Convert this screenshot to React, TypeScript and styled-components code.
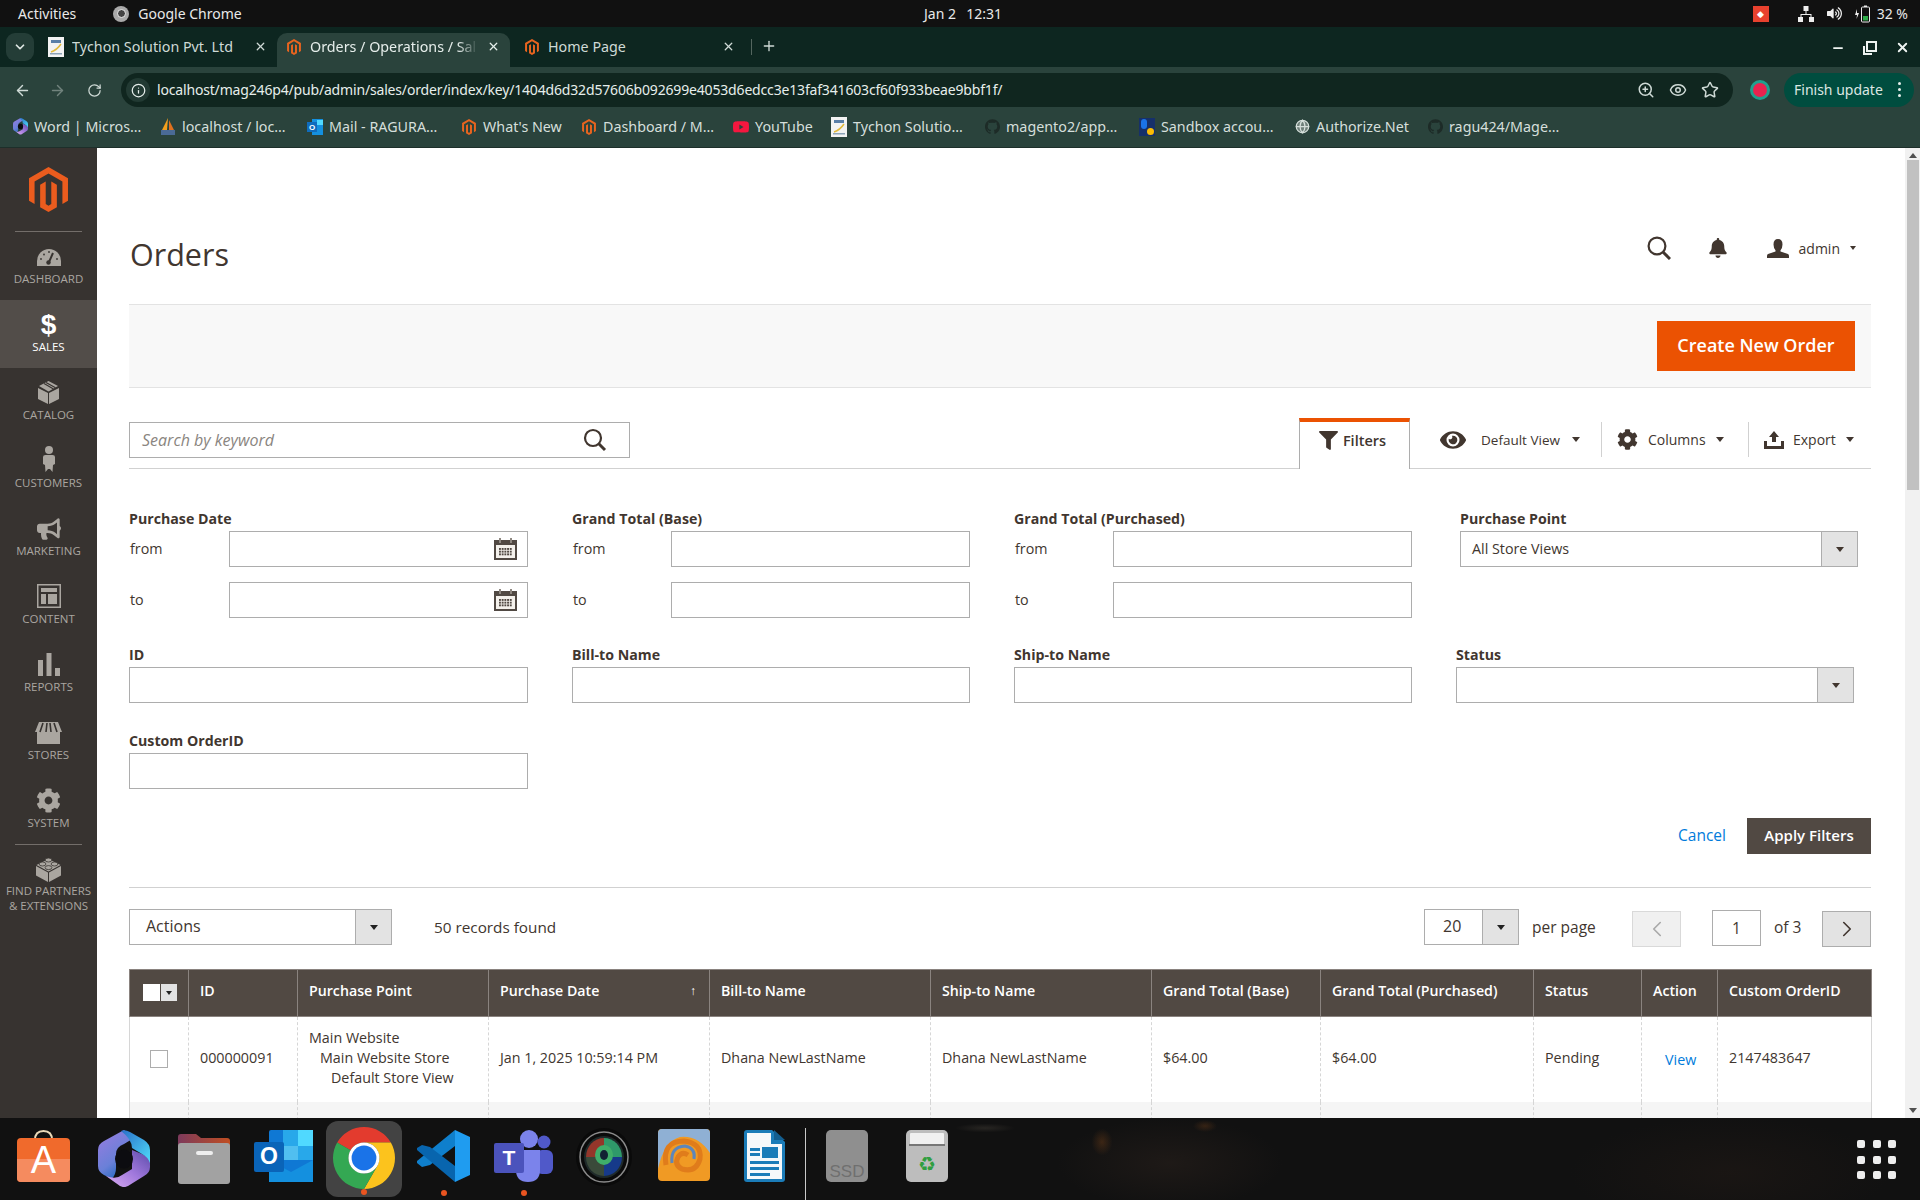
import React from 'react';
import styled, { createGlobalStyle } from 'styled-components';
import { ArrowLeft, ArrowRight, RotateCw, Info, Star, Eye, ZoomIn, Minus, X, Plus, ChevronDown, ChevronLeft, ChevronRight, Globe } from 'lucide-react';
import { SiMagento, SiGithub, SiYoutube } from 'react-icons/si';
import { FaFilter, FaEye, FaCog, FaBell, FaBullhorn, FaVolumeUp } from 'react-icons/fa';

const Global = createGlobalStyle`
  * { box-sizing: border-box; }
  html, body { margin: 0; padding: 0; overflow: hidden; background: #111; }
  body { font-family: "Open Sans", "Noto Sans", sans-serif; color: #41362f; }
`;

const CHROME_FONT = `"Noto Sans", "Open Sans", sans-serif`;

const Screen = styled.div`width: 1920px; height: 1200px; display: flex; flex-direction: column; overflow: hidden;`;

/* ---------- GNOME top bar ---------- */
const TopBar = styled.div`
  height: 27px; background: #111; color: #e9e9e9; font: 14px ${CHROME_FONT};
  display: flex; align-items: center; padding: 0 12px 0 18px; flex: none;
`;
const TopSide = styled.div<{ $end?: boolean }>`flex: 1; display: flex; align-items: center; justify-content: ${p => (p.$end ? 'flex-end' : 'flex-start')};`;
const Activities = styled.span`margin-right: 37px;`;
const AppName = styled.span`display: flex; align-items: center; gap: 9px;`;
const AppDot = styled.span`width: 16px; height: 16px; border-radius: 50%; background: #aaa; display: flex; align-items: center; justify-content: center; &::after { content: ''; width: 7px; height: 7px; border-radius: 50%; background: #444; border: 1px solid #eee; }`;
const Clock = styled.div`width: 78px; text-align: center; display: flex; justify-content: space-between; white-space: nowrap;`;
const TrayRed = styled.span`width: 16px; height: 16px; background: #e8412e; display: flex; align-items: center; justify-content: center; margin-right: 29px; color: #fff; font-size: 9px;`;
const TrayIcon = styled.span<{ $mr: number }>`display: flex; margin-right: ${p => p.$mr}px; color: #eee;`;

/* ---------- Chrome ---------- */
const TabStrip = styled.div`height: 40px; background: #0d2620; display: flex; align-items: flex-end; flex: none; font: 14.3px ${CHROME_FONT}; color: #cfdad6;`;
const TabChevron = styled.div`width: 28px; height: 28px; margin: 0 6px 6px 6px; border-radius: 9px; background: #243d37; display: flex; align-items: center; justify-content: center; color: #dfe7e4;`;
const Tab = styled.div<{ $active?: boolean; $w: number; $pl: number }>`
  width: ${p => p.$w}px; height: 34px; padding: 0 10px 7px ${p => p.$pl}px; display: flex; align-items: center;
  background: ${p => (p.$active ? '#2a433c' : 'transparent')}; border-radius: 10px 10px 0 0;
  color: ${p => (p.$active ? '#e6eeeb' : '#cfdad6')};
`;
const TabTitle = styled.span<{ $fade?: boolean }>`
  flex: 1; margin-left: 8px; white-space: nowrap; overflow: hidden; min-width: 0;
  ${p => (p.$fade ? 'mask-image: linear-gradient(90deg,#000 88%,transparent 100%);' : '')}
`;
const TabClose = styled.span<{ $ml?: number }>`display: flex; margin-left: ${p => p.$ml ?? 0}px;`;
const TabSep = styled.span`width: 1px; height: 16px; background: #54665f; margin: 0 9px 12px 6px;`;
const NewTab = styled.span`display: flex; margin-bottom: 13px; color: #cfdad6;`;
const WinControls = styled.div`margin-left: auto; display: flex; gap: 18px; align-items: center; padding: 0 10px 12px 0; color: #eef3f1;`;
const Toolbar = styled.div`height: 40px; background: #2a433c; display: flex; align-items: flex-start; padding-top: 6px; flex: none; color: #cfdad6;`;
const NavIcon = styled.span<{ $ml: number; $dim?: boolean }>`width: 18px; height: 34px; margin-left: ${p => p.$ml}px; display: flex; align-items: center; justify-content: center; color: ${p => (p.$dim ? '#71837d' : '#cfdad6')};`;
const AddressBar = styled.div`
  width: 1612px; height: 34px; margin-left: 18px; border-radius: 17px; background: #10261f;
  display: flex; align-items: center; padding: 0 14px 0 5px; color: #e6eeeb; font: 14px ${CHROME_FONT};
`;
const SiteInfo = styled.span`width: 24px; height: 24px; border-radius: 50%; background: #223a33; display: flex; align-items: center; justify-content: center; margin-right: 7px;`;
const Url = styled.span`flex: 1; white-space: nowrap; overflow: hidden; letter-spacing: -0.17px; padding-bottom: 1px;`;
const AddrIcons = styled.span`display: flex; gap: 14px; color: #cfdad6;`;
const Profile = styled.span`width: 20px; height: 20px; border-radius: 50%; background: #e8234f; border: 3px solid #1f9f8e; margin: 7px 14px 0 17px; flex: none;`;
const FinishPill = styled.div`width: 130px; height: 34px; border-radius: 17px; background: #004d3f; display: flex; align-items: center; justify-content: space-between; padding: 0 13px 1px 10px; font: 14px ${CHROME_FONT}; color: #dce7e3; flex: none;`;
const Dots = styled.span`display: flex; flex-direction: column; gap: 3px; span { width: 3px; height: 3px; border-radius: 50%; background: #e6eeeb; display: block; }`;
const BookmarkBar = styled.div`height: 41px; background: #2a433c; display: flex; align-items: center; padding: 0 0 1px 12px; flex: none; border-bottom: 1px solid #1d2f2a; font: 14.3px ${CHROME_FONT}; color: #d5dfdb;`;
const Bookmark = styled.div<{ $w: number }>`width: ${p => p.$w}px; display: flex; align-items: center; gap: 6px; white-space: nowrap; flex: none;`;
const BmGlyph = styled.span`width: 16px; height: 16px; display: flex; align-items: center; justify-content: center; flex: none;`;

/* ---------- Middle ---------- */
const Middle = styled.div`flex: 1; min-height: 0; display: flex; background: #fff;`;
const Sidebar = styled.nav`width: 97px; background: #373330; flex: none; display: flex; flex-direction: column;`;
const LogoBox = styled.div`height: 83px; display: flex; align-items: center; justify-content: center; padding-bottom: 1px;`;
const SideRule = styled.div`height: 1px; margin: 0 15px; background: #736e6a; flex: none;`;
const SideItem = styled.div<{ $active?: boolean }>`
  height: 68px; display: flex; flex-direction: column; align-items: center; padding-top: 10px;
  background: ${p => (p.$active ? '#524d49' : 'transparent')}; color: ${p => (p.$active ? '#fff' : '#aaa6a0')};
`;
const SideIcon = styled.div<{ $up?: number }>`height: 29px; display: flex; align-items: center; justify-content: center; padding-bottom: ${p => p.$up ?? 0}px;`;
const SideLabel = styled.div`font-size: 11.5px; line-height: 15px; text-transform: uppercase; text-align: center; white-space: nowrap;`;
const Dollar = styled.span`font: 700 28px/28px "Liberation Sans", sans-serif;`;

const Main = styled.main`flex: 1; min-width: 0; padding: 0 34px 0 32px; overflow: hidden;`;
const PageHead = styled.header`height: 156px; padding-top: 56px; display: flex; align-items: center; justify-content: space-between;`;
const PageTitle = styled.h1`margin: 0; font-size: 30.5px; font-weight: 400; color: #41362f; line-height: 44px; padding-left: 1px;`;
const UserBar = styled.div`display: flex; align-items: center; margin: 0 15px 12px 0; color: #41362f; font-size: 14px;`;
const UserName = styled.span`margin: 0 10px 0 10px;`;
const Caret = styled.i<{ $c?: string; $s?: number }>`
  display: block; width: 0; height: 0; flex: none;
  border-left: ${p => p.$s ?? 4}px solid transparent; border-right: ${p => p.$s ?? 4}px solid transparent;
  border-top: ${p => (p.$s ?? 4) + 1}px solid ${p => p.$c ?? '#41362f'};
`;
const ActionBar = styled.div`height: 84px; background: #f8f8f8; border: solid #e3e3e3; border-width: 1px 0; display: flex; align-items: center; justify-content: flex-end; padding-right: 16px;`;
const PrimaryBtn = styled.button`width: 198px; height: 50px; border: 0; padding: 0 0 2px; background: #eb5202; color: #fff; font: 600 18px "Open Sans", sans-serif;`;

const ToolRow = styled.div`margin-top: 30px; height: 51px; border-bottom: 1px solid #d1d1d1; display: flex; justify-content: space-between;`;
const SearchBox = styled.div`width: 501px; height: 36px; margin-top: 4px; border: 1px solid #adadad; display: flex; align-items: center; justify-content: space-between; padding: 0 22px 1px 12px; font: italic 16px "Open Sans", sans-serif; color: #8a8580;`;
const ToolGroup = styled.div`display: flex; height: 51px;`;
const FilterTab = styled.div`
  width: 111px; height: 51px; background: #fff; border: 1px solid #adadad; border-top: 4px solid #eb5202; border-bottom: 0;
  display: flex; align-items: center; justify-content: center; gap: 5px; font-size: 14.5px; font-weight: 600; padding: 0 4px 11px 0;
`;
const ToolBtn = styled.div<{ $w: number; $pl: number; $gap: number; $rule?: boolean }>`
  width: ${p => p.$w}px; padding-left: ${p => p.$pl}px; gap: ${p => p.$gap}px; height: 35px; margin-top: 4px;
  display: flex; align-items: center; font-size: 14px; white-space: nowrap;
  ${p => (p.$rule ? 'border-right: 1px solid #d1d1d1;' : '')}
`;
const ToolText = styled.span<{ $mr: number; $fs?: number }>`margin-right: ${p => p.$mr}px; font-size: ${p => p.$fs ?? 14}px;`;

const FilterGrid = styled.div`margin-top: 40px; display: grid; grid-template-columns: 399px 398px 398px 1fr; column-gap: 44px; row-gap: 27px;`;
const Field = styled.div<{ $ml?: number; $tm?: number }>`margin-left: ${p => p.$ml ?? 0}px; margin-top: ${p => p.$tm ?? 0}px; min-width: 0;`;
const FieldLabel = styled.div`font-size: 14.2px; font-weight: 700; line-height: 20px; margin-bottom: 2px; color: #41362f;`;
const RangeRow = styled.div<{ $lw?: number }>`display: flex; align-items: center; font-size: 14.3px; margin-bottom: 15px; &:last-child { margin-bottom: 0; } > span { width: ${p => p.$lw ?? 100}px; padding-left: 1px; flex: none; margin-top: -2px; }`;
const TextInput = styled.div`flex: 1; height: 36px; border: 1px solid #adadad; background: #fff; display: flex; align-items: center; justify-content: flex-end; padding-right: 10px;`;
const SelectBox = styled.div<{ $w?: number; $h?: number; $seg?: number }>`
  width: ${p => (p.$w ? `${p.$w}px` : '100%')}; height: ${p => p.$h ?? 36}px; border: 1px solid #adadad; background: #fff; display: flex; align-items: center; font-size: 14.3px; flex: none;
  > span { flex: 1; padding: 0 0 2px 11px; white-space: nowrap; }
  > b { width: ${p => p.$seg ?? 36}px; height: 100%; background: #e3e3e3; border-left: 1px solid #adadad; display: flex; align-items: center; justify-content: center; }
`;
const BigValue = styled.span<{ $pl: number }>`&& { padding-left: ${p => p.$pl}px; font-size: 16px; }`;
const FilterFoot = styled.div`margin-top: 29px; padding-bottom: 33px; border-bottom: 1px solid #d1d1d1; display: flex; justify-content: flex-end; align-items: center; gap: 21px;`;
const LinkText = styled.span`color: #007bdb; font-size: 15.5px; margin-bottom: 2px;`;
const DarkBtn = styled.button`width: 124px; height: 36px; border: 0; padding: 0 0 2px; background: #514943; color: #fff; font: 600 15px "Open Sans", sans-serif;`;

const Paging = styled.div`margin-top: 21px; height: 38px; display: flex; align-items: flex-start; font-size: 15.5px;`;
const Records = styled.span`margin-left: 42px; line-height: 36px; font-size: 15.3px; flex: 1;`;
const PagerText = styled.span<{ $ml: number; $w?: number }>`margin-left: ${p => p.$ml}px; line-height: 36px; ${p => (p.$w ? `width: ${p.$w}px;` : '')} white-space: nowrap;`;
const PageBtn = styled.div<{ $off?: boolean; $ml: number }>`
  width: 49px; height: 36px; margin-top: 2px; margin-left: ${p => p.$ml}px; display: flex; align-items: center; justify-content: center;
  background: ${p => (p.$off ? '#f0f0f0' : '#e3e3e3')}; border: 1px solid ${p => (p.$off ? '#d9d9d9' : '#adadad')}; color: ${p => (p.$off ? '#a8a8a8' : '#41362f')};
`;
const PageInput = styled.div`width: 49px; height: 36px; margin: 1px 0 0 31px; border: 1px solid #adadad; display: flex; align-items: center; justify-content: center;`;

const Grid = styled.table`margin-top: 22px; width: 1742px; border-collapse: collapse; table-layout: fixed; font-size: 14.3px;`;
const HeadCell = styled.th`
  height: 47px; background: #514943; color: #fff; font-weight: 600; font-size: 14.2px; text-align: left; padding: 0 10px 5px 11px;
  border: 1px solid #8a837f; white-space: nowrap;
`;
const MassCell = styled(HeadCell)`padding: 0 0 0 10px;`;
const HeadFlex = styled.span`display: flex; justify-content: space-between; align-items: center;`;
const SortMark = styled.span`font-size: 12px; font-weight: 400; margin-right: 3px;`;
const MassBox = styled.div`width: 34px; height: 17px; display: flex; margin-left: 3px; margin-top: -1px; > i { width: 17px; background: #fff; display: block; } > b { width: 17px; margin-left: 1px; background: #e3e3e3; display: flex; align-items: center; justify-content: center; }`;
const Row = styled.tr<{ $alt?: boolean }>`background: ${p => (p.$alt ? '#f5f5f5' : '#fff')};`;
const Cell = styled.td`height: 85px; padding: 0 10px 3px 11px; border-left: 1px dashed #d6d6d6; border-right: 1px dashed #d6d6d6; white-space: nowrap; vertical-align: middle; &:first-child { border-left: 1px solid #d6d6d6; } &:last-child { border-right: 1px solid #d6d6d6; }`;
const PointLine = styled.div<{ $lvl: number }>`padding-left: ${p => p.$lvl * 11}px; line-height: 20px;`;
const CheckBox = styled.div`width: 18px; height: 18px; border: 1px solid #adadad; background: #fff; margin: 2px 0 0 9px;`;
const ViewLink = styled.span`color: #007bdb; margin-left: 12px; position: relative; top: 2px;`;

const ScrollTrack = styled.div`width: 15px; flex: none; background: #f1f1f1; display: flex; flex-direction: column; align-items: center;`;
const Thumb = styled.div`width: 12px; height: 330px; background: #c1c1c1; margin-top: 2px; margin-left: 1px;`;
const ScrollUp = styled.i`display:block; margin-top: 5px; border-left: 4px solid transparent; border-right: 4px solid transparent; border-bottom: 5px solid #505050;`;
const ScrollDown = styled.i`display:block; margin-top: auto; margin-bottom: 5px; border-left: 4px solid transparent; border-right: 4px solid transparent; border-top: 5px solid #505050;`;

/* ---------- Dock ---------- */
const Dock = styled.div`
  height: 82px; flex: none; display: flex; align-items: flex-start; position: relative;
  background:
    radial-gradient(ellipse 14px 18px at 1102px 24px, rgba(120,66,24,.4), transparent 75%),
    radial-gradient(ellipse 16px 8px at 1205px 8px, rgba(120,66,24,.35), transparent 75%),
    radial-gradient(ellipse 150px 60px at 1170px 45px, rgba(50,38,32,.4), transparent 75%),
    radial-gradient(ellipse 40px 6px at 985px 10px, rgba(120,110,95,.22), transparent 75%),
    radial-gradient(ellipse 200px 70px at 1730px 55px, rgba(42,30,24,.35), transparent 80%),
    #111111;
`;
const DockSlot = styled.div<{ $ml: number; $w: number; $top?: number }>`
  margin-left: ${p => p.$ml}px; width: ${p => p.$w}px; margin-top: ${p => p.$top ?? 12}px; display: flex; justify-content: center; flex: none;
`;
const ChromeSlot = styled.div`width: 76px; height: 76px; margin: 3px 0 0 13px; background: #434343; border-radius: 12px; display: flex; align-items: center; justify-content: center; flex: none; padding-bottom: 2px; position: relative;`;
const RunDot = styled.i<{ $x?: number; $b?: number }>`position: absolute; width: 6px; height: 6px; border-radius: 50%; background: #e95420; left: ${p => p.$x ?? 35}px; bottom: ${p => p.$b ?? 2}px; display: block;`;
const RunWrap = styled.div`position: relative; display: flex;`;
const DockRule = styled.div`width: 1px; height: 72px; margin: 10px 0 0 20px; background: #c9c9c9; flex: none;`;
const AppsGrid = styled.div`margin: 22px 24px 0 auto; width: 39px; height: 39px; display: grid; grid-template-columns: repeat(3, 8px); grid-auto-rows: 8px; justify-content: space-between; align-content: space-between; i { background: #eee; border-radius: 2px; display: block; }`;

/* ---------- drawings ---------- */
const Mag = ({ s = 16, c = '#e8641f' }: { s?: number; c?: string }) => <SiMagento size={s} color={c} />;
const TychonIcon = () => (
  <svg width="16" height="20" viewBox="0 0 16 20"><rect width="16" height="20" fill="#f3f3f3" /><rect x="3" y="3" width="10" height="3" fill="#5a7fa8" /><path d="M3 15 Q9 13 13 7" stroke="#e2b93b" strokeWidth="1.5" fill="none" /><rect x="2" y="16" width="12" height="1.5" fill="#8da3b8" /></svg>
);
const CopilotMark = ({ s = 16, id = 'cp' }: { s?: number; id?: string }) => (
  <svg width={s} height={s * 1.1} viewBox="0 0 52 57">
    <defs>
      <linearGradient id={`${id}A`} x1="0" y1="0" x2="1" y2="1"><stop offset="0" stopColor="#2a6fc8" /><stop offset="1" stopColor="#4fdcfa" /></linearGradient>
      <linearGradient id={`${id}B`} x1="0" y1="0" x2=".6" y2="1"><stop offset="0" stopColor="#9a7ce0" /><stop offset=".65" stopColor="#6a80d8" /><stop offset="1" stopColor="#1f68c0" /></linearGradient>
      <linearGradient id={`${id}C`} x1="1" y1="0" x2="0" y2="1"><stop offset="0" stopColor="#5a4aa8" /><stop offset=".5" stopColor="#a078dc" /><stop offset="1" stopColor="#dcaef2" /></linearGradient>
    </defs>
    <path d="M26 0 L6 11 Q0 14 0 20 V36 Q0 42 6 45 L14 49 Q18 44 18 38 V24 Q18 17 26 14 L36 8 Z" fill={`url(#${id}B)`} />
    <path d="M52 28 V37 Q52 43 46 46 L30 56 Q26 58 22 56 L8 46 Q18 50 24 45 L34 39 V20 L44 24 Z" fill={`url(#${id}C)`} />
    <path d="M23 .8 Q27 -1 32 2 L46 10 Q52 14 52 20 V33 Q50 27 44 24 L34 18 Q34 9 23 .8 Z" fill={`url(#${id}A)`} />
    <ellipse cx="26" cy="29" rx="9" ry="9.5" fill="#0c0c10" />
  </svg>
);
const OutlookSmall = () => (
  <svg width="16" height="16" viewBox="0 0 16 16"><rect x="5" width="11" height="16" fill="#1490df" /><rect x="10" y="1" width="6" height="5" fill="#50d9ff" /><rect y="3" width="10" height="10" fill="#0f6cbd" /><text x="5" y="11" textAnchor="middle" fontSize="8" fontWeight="700" fill="#fff" fontFamily="Liberation Sans">O</text></svg>
);
const PmaIcon = () => (
  <svg width="16" height="18" viewBox="0 0 16 18"><path d="M8 0 L2 12 H7 Z" fill="#f29f1c" /><path d="M9 2 L14 12 H9 Z" fill="#e0701e" /><rect x="1" y="12" width="14" height="5" fill="#4a6a96" /></svg>
);
const SandboxIcon = () => (
  <svg width="16" height="18" viewBox="0 0 16 18"><rect width="16" height="18" fill="#16306a" /><rect x="2" y="1" width="6" height="10" rx="3" fill="#1a73e8" /><circle cx="11.5" cy="13.5" r="3.5" fill="#fbbc04" /></svg>
);
const AuthNetIcon = () => <Globe size={15} color="#d5dfdb" fill="#6f807a" />;
const Chrome48 = ({ s }: { s: number }) => (
  <svg width={s} height={s} viewBox="4 4 40 40">
    <path d="M24 4a20 20 0 0 1 17.32 10H24a10 10 0 0 0-8.66 5L6.68 14A20 20 0 0 1 24 4z" fill="#e33b2e" />
    <path d="M41.32 14A20 20 0 0 1 24 44l8.66-15A10 10 0 0 0 24 14z" fill="#fcc31d" />
    <path d="M24 44A20 20 0 0 1 6.68 14l8.66 5A10 10 0 0 0 32.66 29z" fill="#34a853" />
    <circle cx="24" cy="24" r="10" fill="#fff" /><circle cx="24" cy="24" r="8" fill="#1a73e8" />
  </svg>
);
const UserGlyph = () => (
  <svg width="22" height="19" viewBox="0 0 22 19" fill="#41362f"><path d="M11 0 Q15.5 0 15.5 5.5 Q15.5 9 13.5 11.2 V12.6 L21 15 Q22 15.5 22 17 V19 H0 V17 Q0 15.5 1 15 L8.5 12.6 V11.2 Q6.5 9 6.5 5.5 Q6.5 0 11 0 Z" /></svg>
);
const Gauge = () => (
  <svg width="24" height="18" viewBox="0 0 24 18"><path d="M0 18 V13 A12 12 0 0 1 24 13 V18 Z" fill="currentColor" /><path d="M16 5 L12 14" stroke="#373330" strokeWidth="2" /><circle cx="11.5" cy="14.5" r="2.2" fill="#373330" /><g fill="#373330"><circle cx="4" cy="11" r=".9" /><circle cx="7" cy="6.5" r=".9" /><circle cx="12" cy="4" r=".9" /><circle cx="20" cy="11" r=".9" /></g></svg>
);
const BoxIcon = () => (
  <svg width="21" height="23" viewBox="0 0 21 23"><path d="M0 7 L10 12 V23 L0 18 Z" fill="currentColor" /><path d="M21 7 L11 12 V23 L21 18 Z" fill="currentColor" /><path d="M10.5 0 L20 5 L10.5 10.5 L1 5 Z" fill="currentColor" /><path d="M6 2.6 L15.5 8 M8 1.5 L17.5 6.8" stroke="#373330" strokeWidth="1.2" /></svg>
);
const PersonIcon = () => (
  <svg width="12" height="26" viewBox="0 0 12 26"><circle cx="6" cy="4" r="4" fill="currentColor" /><path d="M2.5 9 H9.5 Q12 9 12 11 V18 L10 19 L9.5 26 L7 23 H5 L2.5 26 L2 19 L0 18 V11 Q0 9 2.5 9 Z" fill="currentColor" /></svg>
);
const ContentIcon = () => (
  <svg width="24" height="24" viewBox="0 0 24 24"><rect x=".75" y=".75" width="22.5" height="22.5" fill="none" stroke="currentColor" strokeWidth="1.5" /><rect x="4" y="4" width="16" height="4" fill="currentColor" /><rect x="4" y="10" width="5" height="10" fill="currentColor" /><rect x="11" y="10" width="9" height="10" fill="currentColor" /></svg>
);
const BarsIcon = () => (
  <svg width="22" height="23" viewBox="0 0 22 23"><rect y="7" width="5" height="16" fill="currentColor" /><rect x="8.5" width="5" height="23" fill="currentColor" /><rect x="17" y="15" width="5" height="8" fill="currentColor" /></svg>
);
const StoreIcon = () => (
  <svg width="27" height="22" viewBox="0 0 27 22"><rect x="2" y="10" width="23" height="12" fill="currentColor" /><path d="M4 0 H23 L27 10 H0 Z" fill="currentColor" /><path d="M8 1 L5 10 M12 1 L11 10 M15 1 L16 10 M19 1 L22 10" stroke="#373330" strokeWidth="1.6" /></svg>
);
const LegoIcon = () => (
  <svg width="25" height="25" viewBox="0 0 25 25"><path d="M0 9 L12 15.5 V25 L0 18.5 Z" fill="currentColor" /><path d="M25 9 L13 15.5 V25 L25 18.5 Z" fill="currentColor" /><path d="M12.5 2 L24.5 8 L12.5 14.5 L.5 8 Z" fill="currentColor" /><g fill="currentColor" stroke="#373330" strokeWidth=".8"><ellipse cx="12.5" cy="3" rx="3.4" ry="2" /><ellipse cx="6.5" cy="7" rx="3.4" ry="2" /><ellipse cx="18.5" cy="7" rx="3.4" ry="2" /><ellipse cx="12.5" cy="10.6" rx="3.4" ry="2" /></g></svg>
);
const SearchGlass = () => (
  <svg width="24" height="24" viewBox="0 0 24 24" fill="none" stroke="#41362f"><circle cx="10" cy="10" r="8" strokeWidth="2.2" /><path d="M15.8 15.8 L22 22" strokeWidth="3" /></svg>
);
const CalIcon = () => (
  <svg width="23" height="22" viewBox="0 0 23 22"><rect y="2" width="23" height="20" fill="#514943" /><rect x="2" y="7" width="19" height="13" fill="#f4f1ec" /><rect x="5" y="0" width="2" height="5" fill="#8f8881" /><rect x="16" y="0" width="2" height="5" fill="#8f8881" /><g fill="#514943">{[0, 1, 2].map(r => [0, 1, 2, 3, 4].map(c => <rect key={`${r}${c}`} x={5 + c * 2.7} y={10 + r * 2.7} width="1.9" height="1.9" />))}</g></svg>
);
const ExportIcon = () => (
  <svg width="20" height="18" viewBox="0 0 20 18" fill="#41362f"><path d="M10 0 L15 6 H12 V11 H8 V6 H5 Z" /><path d="M0 10 H3 V15 H17 V10 H20 V18 H0 Z" /></svg>
);
const NetIcon = () => (
  <svg width="16" height="16" viewBox="0 0 16 16" fill="#eee"><rect x="5.5" y="0" width="5" height="5" /><rect x="0" y="11" width="5" height="5" /><rect x="11" y="11" width="5" height="5" /><path d="M7.5 5h1v3h5v3h-1V9H3.5v2h-1V8h5z" /></svg>
);
const BatteryIcon = () => (
  <svg width="16" height="18" viewBox="0 0 16 18"><path d="M2 4 L0 10 H2 L1.5 14 L4 8 H2 Z" fill="#eee" /><rect x="6.5" y="2" width="8" height="15" rx="1" fill="none" stroke="#eee" /><rect x="9" y="0.5" width="3" height="1.5" fill="#eee" /><rect x="8" y="11" width="5" height="4.5" fill="#2fae4a" /></svg>
);
const StoreApp = () => (
  <svg width="53" height="52" viewBox="0 0 53 52"><path d="M18 10 Q18 1 26.5 1 Q35 1 35 10" fill="none" stroke="#e9d9b8" strokeWidth="2" /><rect y="8" width="53" height="44" rx="4" fill="#f06a2c" /><path d="M0 29 H53 V48 Q53 52 49 52 H4 Q0 52 0 48 Z" fill="#f58b5f" /><text x="26.5" y="43" textAnchor="middle" fontSize="38" fontFamily="Liberation Sans" fill="#fff">A</text></svg>
);
const FilesApp = () => (
  <svg width="52" height="50" viewBox="0 0 52 50"><defs><linearGradient id="fldr" x1="0" x2="1" y1="0" y2="0"><stop offset="0" stopColor="#7d3a5c" /><stop offset="1" stopColor="#c04e22" /></linearGradient></defs><path d="M0 3 Q0 0 3 0 H18 L23 4 H49 Q52 4 52 7 V20 H0 Z" fill="url(#fldr)" /><rect y="9" width="52" height="41" rx="3" fill="#a2a2a2" /><rect x="18" y="17" width="17" height="4" rx="2" fill="#eee" /></svg>
);
const OutlookApp = () => (
  <svg width="59" height="52" viewBox="0 0 59 52"><rect x="15" width="44" height="52" rx="2" fill="#0f78d4" /><rect x="29" y="0" width="15" height="16" fill="#28a8ea" /><rect x="44" y="0" width="15" height="16" fill="#50d9ff" /><rect x="29" y="16" width="15" height="14" fill="#50bff0" /><rect x="44" y="16" width="15" height="14" fill="#28a8ea" /><path d="M15 30 L37 42 L59 30 V52 H15 Z" fill="#1490df" /><rect y="12" width="30" height="30" rx="2" fill="#0a64b8" /><text x="15" y="34" textAnchor="middle" fontSize="23" fontWeight="700" fontFamily="Liberation Sans" fill="#fff">O</text></svg>
);
const VsCodeApp = () => (
  <svg width="53" height="52" viewBox="0 0 53 52"><path d="M38 0 L53 7 V45 L38 52 V36 V16 Z" fill="#1f9cf0" /><path d="M38 0 V16 L13 35 L5 37 L0 33 V31 Z" fill="#0f7fcc" /><path d="M0 20 V18 L5 15 L13 17 L38 36 V52 Z" fill="#0865ae" /></svg>
);
const TeamsApp = () => (
  <svg width="59" height="52" viewBox="0 0 59 52"><circle cx="35" cy="9" r="9" fill="#7b83eb" /><circle cx="50" cy="12" r="6.5" fill="#5059c9" /><rect x="42" y="20" width="17" height="24" rx="6" fill="#5059c9" /><path d="M22 20 H46 V40 Q46 52 34 52 Q22 52 22 40 Z" fill="#7b83eb" /><rect y="13" width="30" height="30" rx="2" fill="#4b53bc" /><text x="15" y="35" textAnchor="middle" fontSize="21" fontWeight="700" fontFamily="Liberation Sans" fill="#fff">T</text></svg>
);
const LensApp = () => (
  <svg width="56" height="58" viewBox="0 0 56 58"><ellipse cx="28" cy="29" rx="28" ry="29" fill="#0a0a0a" /><ellipse cx="28" cy="29" rx="24" ry="25" fill="none" stroke="#8a8a8a" strokeWidth="1.5" /><ellipse cx="28" cy="29" rx="20" ry="21" fill="#1f2a2a" /><path d="M10 29 A18 19 0 0 1 28 10 L28 29 Z" fill="#b23a2a" opacity=".8" /><path d="M28 10 A18 19 0 0 1 46 29 L28 29 Z" fill="#2f9a6a" /><path d="M46 29 A18 19 0 0 1 28 48 L28 29 Z" fill="#163a8a" /><path d="M10 29 A18 19 0 0 0 28 48 L28 29 Z" fill="#3a4a3a" /><ellipse cx="28" cy="27" rx="9" ry="10" fill="#3fae6a" /><ellipse cx="28" cy="27" rx="4" ry="5" fill="#123" /></svg>
);
const SwirlApp = () => (
  <svg width="52" height="52" viewBox="0 0 52 52"><rect width="52" height="52" rx="4" fill="#f09a24" /><path d="M0 4 Q0 0 4 0 H48 Q52 0 52 4 V24 Q40 6 22 8 Q6 12 0 40 Z" fill="#8fb0d4" /><path d="M8 36 Q4 12 26 12 Q44 14 42 30 Q38 44 24 40 Q16 36 20 28 Q24 22 30 26" fill="none" stroke="#e07c1b" strokeWidth="5" /><path d="M14 34 Q12 18 27 17 Q38 19 36 30" fill="none" stroke="#5d86bb" strokeWidth="3" /></svg>
);
const WriterApp = () => (
  <svg width="41" height="52" viewBox="0 0 41 52"><path d="M3 0 H28 L41 12 V49 Q41 52 38 52 H3 Q0 52 0 49 V3 Q0 0 3 0 Z" fill="#1b7cb8" /><path d="M3 3 H27 V14 H38 V49 H3 Z" fill="#f5f8fa" /><path d="M30 0 L41 10 H30 Z" fill="#135e8f" /><rect x="6" y="18" width="10" height="3" fill="#1b7cb8" /><rect x="6" y="23" width="10" height="3" fill="#1b7cb8" /><rect x="18" y="17" width="16" height="11" fill="#1b7cb8" /><rect x="6" y="31" width="29" height="3" fill="#1b7cb8" /><rect x="6" y="37" width="29" height="3" fill="#1b7cb8" /><rect x="6" y="43" width="20" height="3" fill="#1b7cb8" /></svg>
);
const SsdApp = () => (
  <svg width="42" height="52" viewBox="0 0 42 52"><rect width="42" height="52" rx="5" fill="#8f8f8f" /><text x="21" y="47" textAnchor="middle" fontSize="17" fontFamily="Liberation Sans" fill="#6f6f6f">SSD</text></svg>
);
const TrashApp = () => (
  <svg width="42" height="52" viewBox="0 0 42 52"><rect width="42" height="52" rx="5" fill="#bdbdbd" /><rect x="4" y="3" width="34" height="12" rx="1" fill="#f0f0f0" /><rect x="3" y="14" width="36" height="2" fill="#777" /><text x="21" y="41" textAnchor="middle" fontSize="20" fontFamily="DejaVu Sans" fill="#2f9e3f">♻</text></svg>
);

const sideItems: [string, React.ReactNode, boolean?, number?][] = [
  ['Dashboard', <Gauge />],
  ['Sales', <Dollar>$</Dollar>, true],
  ['Catalog', <BoxIcon />],
  ['Customers', <PersonIcon />, false, 4],
  ['Marketing', <FaBullhorn size={24} />],
  ['Content', <ContentIcon />, false, 2],
  ['Reports', <BarsIcon />],
  ['Stores', <StoreIcon />],
  ['System', <FaCog size={25} />],
];

const bookmarks: [string, number, React.ReactNode][] = [
  ['Word | Micros…', 148, <CopilotMark s={15} id="bmcp" />],
  ['localhost / loc…', 147, <PmaIcon />],
  ['Mail - RAGURA…', 154, <OutlookSmall />],
  ["What's New", 120, <Mag />],
  ['Dashboard / M…', 152, <Mag />],
  ['YouTube', 98, <SiYoutube size={16} color="#f4173f" />],
  ['Tychon Solutio…', 153, <TychonIcon />],
  ['magento2/app…', 155, <SiGithub size={15} color="#1d2b27" />],
  ['Sandbox accou…', 155, <SandboxIcon />],
  ['Authorize.Net', 133, <AuthNetIcon />],
  ['ragu424/Mage…', 160, <SiGithub size={15} color="#1d2b27" />],
];

const cols = [59, 109, 191, 221, 221, 221, 169, 213, 108, 76, 154];
const heads = ['ID', 'Purchase Point', 'Purchase Date', 'Bill-to Name', 'Ship-to Name', 'Grand Total (Base)', 'Grand Total (Purchased)', 'Status', 'Action', 'Custom OrderID'];

export default function App() {
  return (
    <Screen>
      <Global />
      <TopBar>
        <TopSide>
          <Activities>Activities</Activities>
          <AppName><AppDot />Google Chrome</AppName>
        </TopSide>
        <Clock><span>Jan 2</span><span>12:31</span></Clock>
        <TopSide $end>
          <TrayRed>◆</TrayRed>
          <TrayIcon $mr={13}><NetIcon /></TrayIcon>
          <TrayIcon $mr={13}><FaVolumeUp size={15} /></TrayIcon>
          <TrayIcon $mr={6}><BatteryIcon /></TrayIcon>
          <span>32 %</span>
        </TopSide>
      </TopBar>

      <TabStrip>
        <TabChevron><ChevronDown size={14} strokeWidth={3} /></TabChevron>
        <Tab $w={237} $pl={8}>
          <TychonIcon />
          <TabTitle>Tychon Solution Pvt. Ltd</TabTitle>
          <TabClose><X size={13} strokeWidth={2.4} /></TabClose>
        </Tab>
        <Tab $active $w={233} $pl={9}>
          <Mag />
          <TabTitle $fade>Orders / Operations / Sal</TabTitle>
          <TabClose $ml={9}><X size={13} strokeWidth={2.4} /></TabClose>
        </Tab>
        <Tab $w={235} $pl={14}>
          <Mag />
          <TabTitle>Home Page</TabTitle>
          <TabClose><X size={13} strokeWidth={2.4} /></TabClose>
        </Tab>
        <TabSep />
        <NewTab><Plus size={16} /></NewTab>
        <WinControls>
          <Minus size={14} strokeWidth={3} />
          <svg width="14" height="14" viewBox="0 0 14 14" fill="none" stroke="#eef3f1" strokeWidth="2"><rect x="4" y="1" width="9" height="9" /><path d="M1 5 V13 H9" /></svg>
          <X size={15} strokeWidth={3} />
        </WinControls>
      </TabStrip>

      <Toolbar>
        <NavIcon $ml={13}><ArrowLeft size={17} /></NavIcon>
        <NavIcon $ml={17} $dim><ArrowRight size={17} /></NavIcon>
        <NavIcon $ml={19}><RotateCw size={15} /></NavIcon>
        <AddressBar>
          <SiteInfo><Info size={15} /></SiteInfo>
          <Url>localhost/mag246p4/pub/admin/sales/order/index/key/1404d6d32d57606b092699e4053d6edcc3e13faf341603cf60f933beae9bbf1f/</Url>
          <AddrIcons><ZoomIn size={18} /><Eye size={18} /><Star size={18} /></AddrIcons>
        </AddressBar>
        <Profile />
        <FinishPill>Finish update<Dots><span /><span /><span /></Dots></FinishPill>
      </Toolbar>

      <BookmarkBar>
        {bookmarks.map(([t, w, ic]) => (
          <Bookmark key={t} $w={w}><BmGlyph>{ic}</BmGlyph>{t}</Bookmark>
        ))}
      </BookmarkBar>

      <Middle>
        <Sidebar>
          <LogoBox><SiMagento size={45} color="#eb5c1e" /></LogoBox>
          <SideRule />
          {sideItems.map(([t, ic, act, up]) => (
            <SideItem key={t} $active={act}>
              <SideIcon $up={up}>{ic}</SideIcon>
              <SideLabel>{t}</SideLabel>
            </SideItem>
          ))}
          <SideRule />
          <SideItem>
            <SideIcon><LegoIcon /></SideIcon>
            <SideLabel>Find Partners<br />&amp; Extensions</SideLabel>
          </SideItem>
        </Sidebar>

        <Main>
          <PageHead>
            <PageTitle>Orders</PageTitle>
            <UserBar>
              <svg width="24" height="24" viewBox="0 0 24 24" fill="none" stroke="#41362f" style={{ marginRight: 37 }}><circle cx="10" cy="10" r="8.4" strokeWidth="2.2" /><path d="M16 16 L23 23" strokeWidth="3" /></svg>
              <FaBell size={20} style={{ marginRight: 39 }} />
              <UserGlyph />
              <UserName>admin</UserName>
              <Caret $s={3.5} />
            </UserBar>
          </PageHead>

          <ActionBar><PrimaryBtn>Create New Order</PrimaryBtn></ActionBar>

          <ToolRow>
            <SearchBox>Search by keyword<SearchGlass /></SearchBox>
            <ToolGroup>
              <FilterTab><FaFilter size={19} />Filters</FilterTab>
              <ToolBtn $w={192} $pl={30} $gap={15} $rule>
                <FaEye size={26} />
                <ToolText $mr={-3} $fs={13.5}>Default View</ToolText>
                <Caret />
              </ToolBtn>
              <ToolBtn $w={147} $pl={15} $gap={10} $rule>
                <FaCog size={21} />
                <ToolText $mr={0}>Columns</ToolText>
                <Caret />
              </ToolBtn>
              <ToolBtn $w={122} $pl={15} $gap={9}>
                <ExportIcon />
                <ToolText $mr={1}>Export</ToolText>
                <Caret />
              </ToolBtn>
            </ToolGroup>
          </ToolRow>

          <FilterGrid>
            <Field>
              <FieldLabel>Purchase Date</FieldLabel>
              <RangeRow><span>from</span><TextInput><CalIcon /></TextInput></RangeRow>
              <RangeRow><span>to</span><TextInput><CalIcon /></TextInput></RangeRow>
            </Field>
            <Field>
              <FieldLabel>Grand Total (Base)</FieldLabel>
              <RangeRow $lw={99}><span>from</span><TextInput /></RangeRow>
              <RangeRow $lw={99}><span>to</span><TextInput /></RangeRow>
            </Field>
            <Field>
              <FieldLabel>Grand Total (Purchased)</FieldLabel>
              <RangeRow $lw={99}><span>from</span><TextInput /></RangeRow>
              <RangeRow $lw={99}><span>to</span><TextInput /></RangeRow>
            </Field>
            <Field $ml={4}>
              <FieldLabel>Purchase Point</FieldLabel>
              <SelectBox $w={398}><span>All Store Views</span><b><Caret $s={4} /></b></SelectBox>
            </Field>
            <Field><FieldLabel>ID</FieldLabel><RangeRow><TextInput /></RangeRow></Field>
            <Field><FieldLabel>Bill-to Name</FieldLabel><RangeRow><TextInput /></RangeRow></Field>
            <Field><FieldLabel>Ship-to Name</FieldLabel><RangeRow><TextInput /></RangeRow></Field>
            <Field>
              <FieldLabel>Status</FieldLabel>
              <SelectBox $w={398}><span /><b><Caret $s={4} /></b></SelectBox>
            </Field>
            <Field $tm={1}><FieldLabel>Custom OrderID</FieldLabel><RangeRow><TextInput /></RangeRow></Field>
          </FilterGrid>

          <FilterFoot>
            <LinkText>Cancel</LinkText>
            <DarkBtn>Apply Filters</DarkBtn>
          </FilterFoot>

          <Paging>
            <SelectBox $w={263}><BigValue $pl={16}>Actions</BigValue><b><Caret $c="#222" /></b></SelectBox>
            <Records>50 records found</Records>
            <SelectBox $w={95} $seg={36}><BigValue $pl={18}>20</BigValue><b><Caret $c="#222" /></b></SelectBox>
            <PagerText $ml={13} $w={100}>per page</PagerText>
            <PageBtn $off $ml={0}><ChevronLeft size={26} strokeWidth={1.5} /></PageBtn>
            <PageInput>1</PageInput>
            <PagerText $ml={13} $w={48}>of 3</PagerText>
            <PageBtn $ml={0}><ChevronRight size={26} strokeWidth={1.5} /></PageBtn>
          </Paging>

          <Grid>
            <colgroup>{cols.map((w, i) => <col key={i} width={w} />)}</colgroup>
            <thead>
              <tr>
                <MassCell><MassBox><i /><b><Caret $c="#222" $s={3.5} /></b></MassBox></MassCell>
                {heads.map(h => (
                  <HeadCell key={h}>
                    {h === 'Purchase Date' ? <HeadFlex>{h}<SortMark>↑</SortMark></HeadFlex> : h}
                  </HeadCell>
                ))}
              </tr>
            </thead>
            <tbody>
              <Row>
                <Cell><CheckBox /></Cell>
                <Cell>000000091</Cell>
                <Cell>
                  <PointLine $lvl={0}>Main Website</PointLine>
                  <PointLine $lvl={1}>Main Website Store</PointLine>
                  <PointLine $lvl={2}>Default Store View</PointLine>
                </Cell>
                <Cell>Jan 1, 2025 10:59:14 PM</Cell>
                <Cell>Dhana NewLastName</Cell>
                <Cell>Dhana NewLastName</Cell>
                <Cell>$64.00</Cell>
                <Cell>$64.00</Cell>
                <Cell>Pending</Cell>
                <Cell><ViewLink>View</ViewLink></Cell>
                <Cell>2147483647</Cell>
              </Row>
              <Row $alt>
                {cols.map((_, i) => <Cell key={i} />)}
              </Row>
            </tbody>
          </Grid>
        </Main>

        <ScrollTrack>
          <ScrollUp />
          <Thumb />
          <ScrollDown />
        </ScrollTrack>
      </Middle>

      <Dock>
        <DockSlot $ml={17} $w={53}><StoreApp /></DockSlot>
        <DockSlot $ml={28} $w={52}><CopilotMark s={52} id="dockcp" /></DockSlot>
        <DockSlot $ml={28} $w={52} $top={16}><FilesApp /></DockSlot>
        <DockSlot $ml={24} $w={59} $top={12}><OutlookApp /></DockSlot>
        <ChromeSlot><Chrome48 s={62} /><RunDot /></ChromeSlot>
        <DockSlot $ml={15} $w={53}><RunWrap><VsCodeApp /><RunDot $x={24} $b={-14} /></RunWrap></DockSlot>
        <DockSlot $ml={24} $w={59}><RunWrap><TeamsApp /><RunDot $x={27} $b={-14} /></RunWrap></DockSlot>
        <DockSlot $ml={23} $w={56} $top={10}><LensApp /></DockSlot>
        <DockSlot $ml={26} $w={52} $top={11}><SwirlApp /></DockSlot>
        <DockSlot $ml={34} $w={41} $top={12}><WriterApp /></DockSlot>
        <DockRule />
        <DockSlot $ml={20} $w={42} $top={12}><SsdApp /></DockSlot>
        <DockSlot $ml={38} $w={42} $top={12}><TrashApp /></DockSlot>
        <AppsGrid>{Array.from({ length: 9 }).map((_, i) => <i key={i} />)}</AppsGrid>
      </Dock>
    </Screen>
  );
}
